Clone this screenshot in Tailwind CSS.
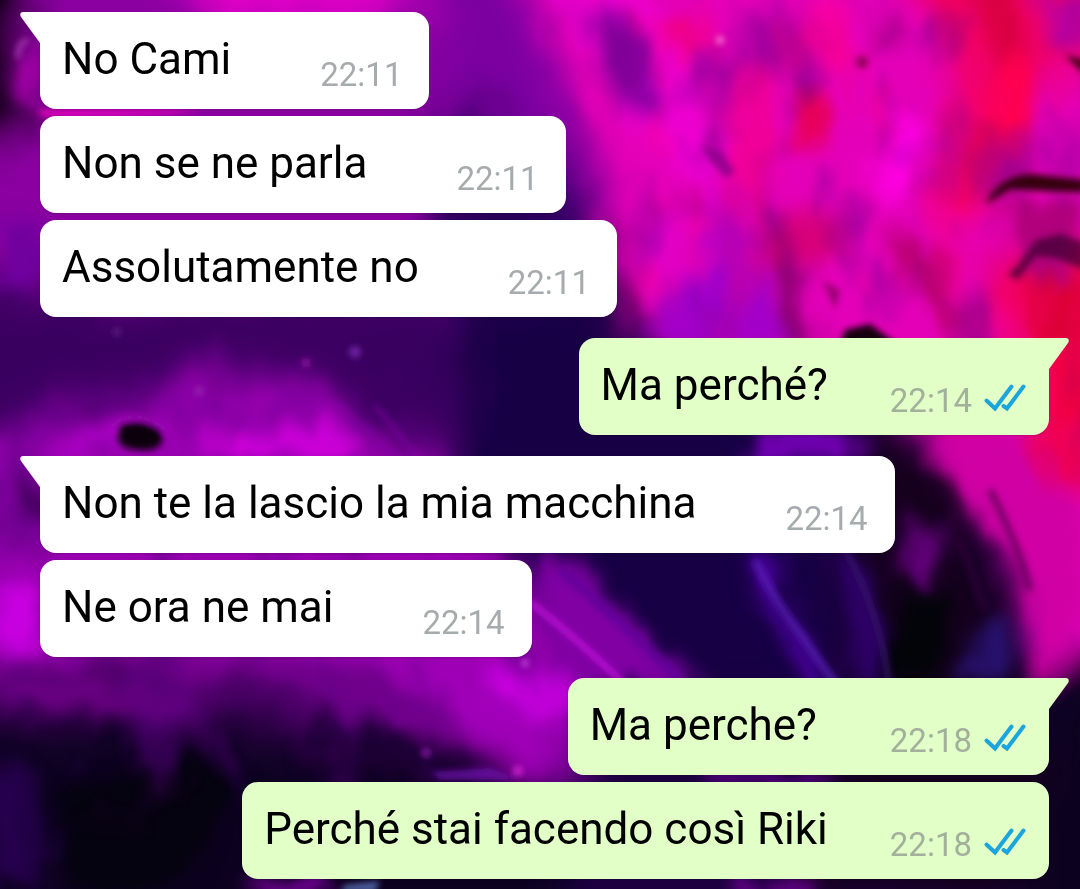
<!DOCTYPE html>
<html lang="it">
<head>
  <meta charset="UTF-8">
  <meta name="viewport" content="width=device-width, initial-scale=1">
  <title>Chat</title>
  <script src="https://cdn.jsdelivr.net/npm/@tailwindcss/browser@4"></script>
</head>
<body class="relative isolate min-h-screen overflow-x-hidden bg-[#1c0040] font-['Roboto',sans-serif] text-black">

  <!-- Wallpaper -->
  <svg class="absolute inset-0 -z-10 h-full w-full" viewBox="0 0 1080 889" preserveAspectRatio="xMidYMid slice" aria-hidden="true">
    <defs>
      <filter id="wide" x="-20%" y="-20%" width="140%" height="140%" color-interpolation-filters="sRGB">
        <feGaussianBlur stdDeviation="20" result="b"/>
        <feTurbulence type="fractalNoise" baseFrequency="0.012 0.009" numOctaves="3" seed="4"/>
        <feDisplacementMap in="b" scale="60" xChannelSelector="R" yChannelSelector="G"/>
        <feGaussianBlur stdDeviation="3"/>
      </filter>
      <filter id="mid" x="-20%" y="-20%" width="140%" height="140%" color-interpolation-filters="sRGB">
        <feGaussianBlur stdDeviation="9" result="b"/>
        <feTurbulence type="fractalNoise" baseFrequency="0.022 0.014" numOctaves="3" seed="9"/>
        <feDisplacementMap in="b" scale="40" xChannelSelector="R" yChannelSelector="G"/>
        <feGaussianBlur stdDeviation="3"/>
      </filter>
      <filter id="fine" x="-20%" y="-20%" width="140%" height="140%">
        <feGaussianBlur stdDeviation="3"/>
      </filter>
      <filter id="smoke" x="-10%" y="-10%" width="120%" height="120%" color-interpolation-filters="sRGB">
        <feGaussianBlur in="SourceAlpha" stdDeviation="25" result="area"/>
        <feTurbulence type="fractalNoise" baseFrequency="0.016 0.009" numOctaves="3" seed="21"/>
        <feColorMatrix values="0 0 0 0 .35  0 0 0 0 0  0 0 0 0 .5  4 0 0 0 -2"/>
        <feGaussianBlur stdDeviation="3" result="noise"/>
        <feComposite in="noise" in2="area" operator="in"/>
      </filter>
      <filter id="glow" x="-10%" y="-10%" width="120%" height="120%" color-interpolation-filters="sRGB">
        <feGaussianBlur in="SourceAlpha" stdDeviation="25" result="area"/>
        <feTurbulence type="fractalNoise" baseFrequency="0.014 0.008" numOctaves="3" seed="33"/>
        <feColorMatrix values="0 0 0 0 1  0 0 0 0 0  0 0 0 0 .45  0 4 0 0 -2"/>
        <feGaussianBlur stdDeviation="3" result="noise"/>
        <feComposite in="noise" in2="area" operator="in"/>
      </filter>
    </defs>
    <rect width="1080" height="889" fill="#1c0040"/>

    <g filter="url(#wide)">
      <path d="M-60-60H520L590 160 560 330H-60z" fill="#8a00a0"/>
      <path d="M-60-60H30L25 130-60 150z" fill="#100014"/>
      <path d="M170-60H420L400 30 200 30z" fill="#e000c8"/>
      <path d="M430-60H520L600 200 560 340 430 300z" fill="#7c00a0"/>
      <path d="M440 100L520 140 590 230 560 330 440 330z" fill="#280058"/>
      <path d="M510-60H1140V700L1060 690 1010 540 900 400 620 330 590 150z" fill="#e400b8"/>
      <path d="M-60 290H470L560 400 450 460H-60z" fill="#3a0060"/>
      <path d="M450 310H620L800 450 840 700H520L470 480z" fill="#170044"/>
      <path d="M-60 440L80 410 250 370 330 380 420 450 520 560 580 680 560 790 400 770 220 670-60 670z" fill="#9800b0"/>
      <path d="M-60 700H130L380 730 560 790 560 950H-60z" fill="#0c0220"/>
      <path d="M-60 670L240 660 390 700 480 760 200 730-60 720z" fill="#480064"/>
      <path d="M410 650H590L580 790 520 790z" fill="#a000b8"/>
      <path d="M850 430L940 450 1020 620 1050 900H780L860 680z" fill="#15001e"/>
      <path d="M1050 660H1140V950H1020z" fill="#0c0220"/>
      <path d="M900-60H1100V70L1000 90 1000 190 950 230 970 130z" fill="#ee0060"/>
      <path d="M990 260L1140 250V480L1040 440z" fill="#f00048"/>
    </g>

    <g filter="url(#mid)">
      <path d="M545-20L600 60 650 150 740 230 700 60 640-20z" fill="#f000d8" opacity=".7"/>
      <path d="M585 10L625 15 665 100 640 115z" fill="#8a00a0"/>
      <path d="M660 20L690 25 690 60 665 55z" fill="#f00080"/>
      <path d="M725 170L750 240 800 345H640L670 290 710 260z" fill="#a200c8"/>
      <path d="M650 220L700 200 680 280 640 320z" fill="#e000c8"/>
      <path d="M755 180L800 270 815 345 795 345z" fill="#800068"/>
      <path d="M795 90L825 90 820 150 795 150z" fill="#e80050"/>
      <path d="M820 0L840 0 830 90 805 80z" fill="#ff00c0"/>
      <path d="M900 110L930 125 905 200 870 190z" fill="#ff00e4"/>
      <path d="M870 10L900 10 890 50 870 50z" fill="#b00090"/>
      <path d="M1000 60L1030 50 1025 110 970 210 950 210z" fill="#ff0050"/>
      <path d="M960-10H1020V50L1000 70z" fill="#d80040"/>
      <path d="M1035-10H1090V45L1050 40z" fill="#b800a0"/>
      <path d="M780 215L830 210 835 265 790 260z" fill="#d8007c"/>
      <path d="M875 215L895 230 945 270 965 345 940 320 895 265z" fill="#b80070"/>
      <path d="M1000 200H1080V280L1030 290z" fill="#b0007c"/>
      <path d="M1010 290L1090 270V345H1030z" fill="#d80030"/>
      <path d="M1060 340H1090V440L1050 430z" fill="#f00040"/>
      <path d="M750 425H860V465H740z" fill="#7000b0"/>
      <path d="M925 425L1040 425 1080 530 1075 600 1060 680 1045 680 1030 580 980 510z" fill="#d000a4"/>
      <path d="M1030 425H1090V490L1055 490z" fill="#f00054"/>
      <path d="M900 510L945 530 930 590 900 570z" fill="#600078"/>
      <path d="M745 550L775 560 790 620 840 690H815L785 640z" fill="#5000a8"/>
      <path d="M835 550L860 560 900 690H865z" fill="#30006c"/>
      <path d="M530 555L575 555 700 690H560z" fill="#8000a4"/>
      <path d="M980 620L1020 620 1010 690 960 690z" fill="#28106c"/>
      <path d="M910 580L950 590 940 690 880 690z" fill="#020408"/>
      <path d="M70 430L160 420 130 460H60z" fill="#a800c0"/>
      <path d="M210 430L330 420 380 460H210z" fill="#cc00d8"/>
      <path d="M-10 595L45 590V650H-10z" fill="#c800e0"/>
      <path d="M480 655L570 680 560 730 500 690z" fill="#c800e0"/>
      <path d="M250 665L380 670 480 740 430 740z" fill="#70008c"/>
      <path d="M320 710L430 750 500 765 430 780 300 750z" fill="#1c0034"/>
      <path d="M0 680L110 690 210 700 180 715 0 705z" fill="#700088"/>
      <path d="M0 460H35V480L20 560H-10z" fill="#8800a4"/>
      <path d="M30 485H45V530L28 515z" fill="#10001c"/>
      <path d="M0 220H40V290H0z" fill="#7000a0"/>
      <path d="M20 40L42 50V105L20 90z" fill="#b000b4"/>
      <path d="M720 770H830V786H700z" fill="#60008c"/>
      <path d="M740 878H820V900H730z" fill="#6c0090"/>
      <path d="M260 878H330V900H250z" fill="#78009c"/>
      <path d="M60 785L210 755 240 790 180 889H60z" fill="#05030f"/>
      <path d="M-10 760L30 770 50 889H-10z" fill="#26004c"/>
    </g>

    <!-- Ink texture -->
    <path d="M580 0H1080V480L1000 420 880 320H640L620 160z" filter="url(#smoke)" opacity=".45"/>
    <path d="M580 0H1080V480L1000 420 880 320H640L620 160z" filter="url(#glow)" opacity=".45"/>
    <path d="M-60 400H420L560 640V800H-60z" filter="url(#smoke)" opacity=".5"/>

    <g filter="url(#fine)">
      <path d="M985 204Q1000 176 1030 174L1085 180V192Q1050 192 1010 189z" fill="#360008"/>
      <path d="M1008 275L1020 262 1036 240 1060 234 1085 242V270L1056 258 1036 256 1018 280z" fill="#38002c" opacity=".7"/>
      <path d="M1065 55L1085 60V75z" fill="#400018"/>
      <path d="M845 330L870 324 898 345H840z" fill="#140010"/>
      <path d="M702 145L722 152 735 172 725 178 710 160z" fill="#880088" opacity=".8"/>
      <path d="M822 280L840 290 835 310z" fill="#80005c" opacity=".7"/>
      <path d="M120 424Q145 418 160 430 168 446 150 450 122 452 118 440z" fill="#0a0010"/>
      <path d="M110 428Q135 404 168 432" fill="none" stroke="#a414bc" stroke-width="4" opacity=".7"/>
      <path d="M330 400Q370 430 400 462M375 405L420 460" fill="none" stroke="#8c00b0" stroke-width="5" opacity=".5"/>
      <path d="M530 602Q585 645 630 690" fill="none" stroke="#d81cec" stroke-width="5" opacity=".8"/>
      <path d="M560 570Q620 620 690 690" fill="none" stroke="#5c009c" stroke-width="8" opacity=".7"/>
      <path d="M755 560Q775 600 790 620T815 655L840 690" fill="none" stroke="#5818b8" stroke-width="9" opacity=".7"/>
      <path d="M845 550Q880 610 890 690" fill="none" stroke="#381070" stroke-width="8" opacity=".6"/>
      <path d="M960 540L985 610" fill="none" stroke="#280030" stroke-width="8"/>
      <path d="M990 490Q1020 550 1030 590" fill="none" stroke="#50004c" stroke-width="8" opacity=".6"/>
      <path d="M40 110H200Q170 117 40 116z" fill="#f000c0"/>
      <path d="M430 772L490 768 520 780H440z" fill="#7410b8" opacity=".7"/>
      <path d="M345 885L380 881 375 892H340z" fill="#5060a0"/>
      <circle cx="720" cy="40" r="4" fill="#ff70d0"/>
      <circle cx="862" cy="62" r="6" fill="#90005c"/>
      <circle cx="525" cy="663" r="3" fill="#f060ff"/>
      <circle cx="518" cy="771" r="5" fill="#d020d0"/>
      <circle cx="426" cy="753" r="4" fill="#901cb0"/>
      <circle cx="355" cy="352" r="6" fill="#7020a0"/>
      <circle cx="306" cy="363" r="5" fill="#84109c"/>
      <circle cx="199" cy="391" r="4" fill="#9428b0"/>
      <circle cx="117" cy="332" r="4" fill="#582080"/>
      <path d="M18 58Q18 42 28 40" fill="none" stroke="#b040c0" stroke-width="4"/>
    </g>
  </svg>

  <!-- Shared symbols -->
  <svg class="hidden">
    <symbol id="tail" viewBox="0 0 20 31">
      <path d="M20 0H3C.5 0-.6 2.5 1 5L20 31z" fill="currentColor"/>
    </symbol>
    <symbol id="checks" viewBox="0 0 42 28">
      <path d="M2.500 16.500L11 24.500L27.500 2.500M19.500 22L23 24.500L39.500 2.500" fill="none" stroke="currentColor" stroke-width="4" stroke-linecap="round"/>
    </symbol>
  </svg>

  <main class="flex flex-col gap-[21px] pt-3 pr-[31px] pb-[10px] pl-10 text-[44px] leading-[50px]">

    <section class="flex flex-col items-start gap-[7px]">
      <div class="relative flex gap-[89px] rounded-2xl rounded-tl-none bg-white pt-[22px] pr-[27px] pb-[25px] pl-[22px] shadow-sm">
        <svg class="absolute top-0 right-full h-[31px] w-5 text-white" aria-hidden="true"><use href="#tail"/></svg>
        <p>No Cami</p>
        <time class="translate-y-4 text-[33px] text-[#a6abad]">22:11</time>
      </div>
      <div class="flex gap-[89px] rounded-2xl bg-white pt-[22px] pr-[27px] pb-[25px] pl-[22px] shadow-sm">
        <p>Non se ne parla</p>
        <time class="translate-y-4 text-[33px] text-[#a6abad]">22:11</time>
      </div>
      <div class="flex gap-[89px] rounded-2xl bg-white pt-[22px] pr-[27px] pb-[25px] pl-[22px] shadow-sm">
        <p>Assolutamente no</p>
        <time class="translate-y-4 text-[33px] text-[#a6abad]">22:11</time>
      </div>
    </section>

    <section class="flex flex-col items-end gap-[7px]">
      <div class="relative flex gap-[62px] rounded-2xl rounded-tr-none bg-[#e1ffc7] pt-[22px] pr-[23px] pb-[25px] pl-[22px] shadow-sm">
        <svg class="absolute top-0 left-full h-[31px] w-5 -scale-x-100 text-[#e1ffc7]" aria-hidden="true"><use href="#tail"/></svg>
        <p>Ma perché?</p>
        <div class="flex translate-y-4 items-center gap-3 text-[33px] text-[#a3b09c]">
          <time>22:14</time>
          <svg class="mb-1.5 h-7 w-[42px] text-[#1ba5dc]" role="img" aria-label="Letto"><use href="#checks"/></svg>
        </div>
      </div>
    </section>

    <section class="flex flex-col items-start gap-[7px]">
      <div class="relative flex gap-[89px] rounded-2xl rounded-tl-none bg-white pt-[22px] pr-[27px] pb-[25px] pl-[22px] shadow-sm">
        <svg class="absolute top-0 right-full h-[31px] w-5 text-white" aria-hidden="true"><use href="#tail"/></svg>
        <p>Non te la lascio la mia macchina</p>
        <time class="translate-y-4 text-[33px] text-[#a6abad]">22:14</time>
      </div>
      <div class="flex gap-[89px] rounded-2xl bg-white pt-[22px] pr-[27px] pb-[25px] pl-[22px] shadow-sm">
        <p>Ne ora ne mai</p>
        <time class="translate-y-4 text-[33px] text-[#a6abad]">22:14</time>
      </div>
    </section>

    <section class="flex flex-col items-end gap-[7px]">
      <div class="relative flex gap-[62px] rounded-2xl rounded-tr-none bg-[#e1ffc7] pt-[22px] pr-[23px] pb-[25px] pl-[22px] shadow-sm">
        <svg class="absolute top-0 left-full h-[31px] w-5 -scale-x-100 text-[#e1ffc7]" aria-hidden="true"><use href="#tail"/></svg>
        <p>Ma perche?&nbsp;</p>
        <div class="flex translate-y-4 items-center gap-3 text-[33px] text-[#a3b09c]">
          <time>22:18</time>
          <svg class="mb-1.5 h-7 w-[42px] text-[#1ba5dc]" role="img" aria-label="Letto"><use href="#checks"/></svg>
        </div>
      </div>
      <div class="flex gap-[62px] rounded-2xl bg-[#e1ffc7] pt-[22px] pr-[23px] pb-[25px] pl-[22px] shadow-sm">
        <p>Perché stai facendo così Riki</p>
        <div class="flex translate-y-4 items-center gap-3 text-[33px] text-[#a3b09c]">
          <time>22:18</time>
          <svg class="mb-1.5 h-7 w-[42px] text-[#1ba5dc]" role="img" aria-label="Letto"><use href="#checks"/></svg>
        </div>
      </div>
    </section>

  </main>

</body>
</html>
